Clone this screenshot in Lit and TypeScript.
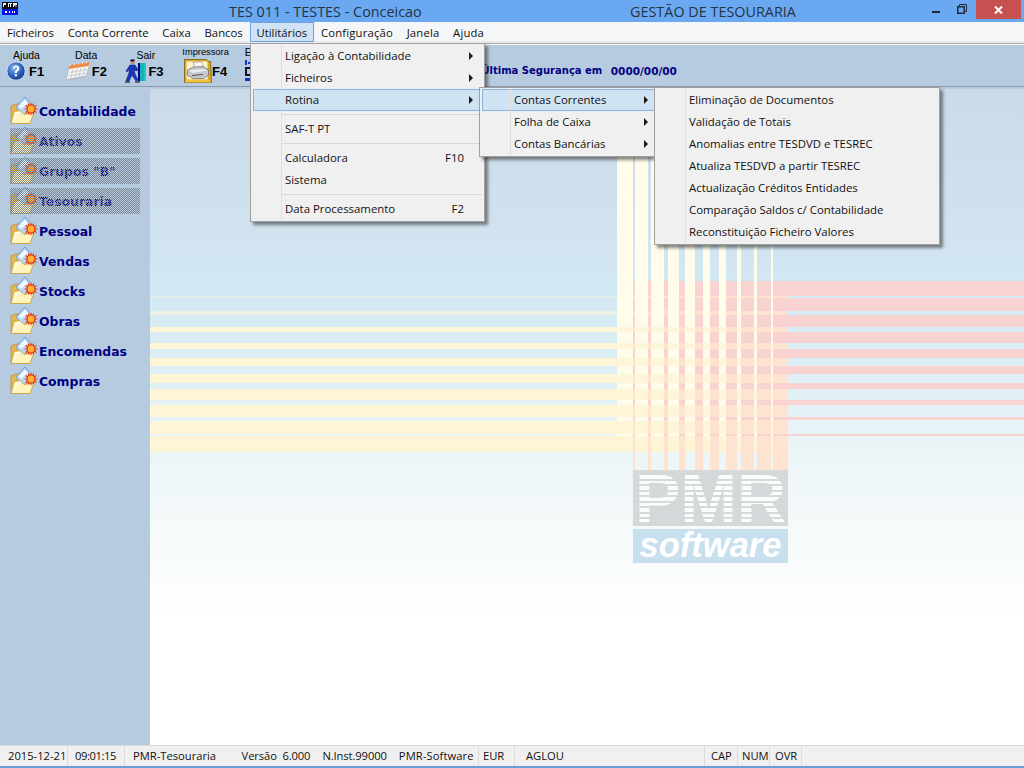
import { LitElement, html, css, svg } from "lit";
import { customElement } from "lit/decorators.js";

const yellow: [number, number, number][] = [
  [296, 298, 0.35], [311, 315, 0.55], [327, 332, 1], [343, 349, 1], [358, 366, 1],
  [374, 383, 1], [389, 400, 1], [405, 417, 1], [421, 434, 1], [436, 452, 1],
];
const pinkH: [number, number][] = [
  [281, 296], [298, 311], [315, 327], [332, 343], [349, 358],
  [366, 374], [383, 389], [400, 405], [417, 420], [434, 436],
];
const creamV: [number, number][] = [
  [617, 633], [635, 648], [651, 664], [668, 679], [685, 695],
  [703, 710], [719, 726], [737, 741], [754, 757], [771, 773],
];
const peachV: [number, number][] = [
  [633, 635], [648, 651], [664, 668], [679, 685], [695, 703],
  [710, 719], [726, 737], [741, 754], [757, 771], [773, 788],
];
const OX = 150, OY = 89;

function backdrop() {
  return html`<svg class="art" width="874" height="656" viewBox="0 0 874 656">
    <defs><linearGradient id="sky" x1="0" y1="0" x2="0" y2="1">
      <stop offset="0" stop-color="#cbdae8"/><stop offset="0.22" stop-color="#d1e3ef"/>
      <stop offset="0.31" stop-color="#d2e9f3"/><stop offset="0.58" stop-color="#eef6f7"/>
      <stop offset="0.8" stop-color="#ffffff"/><stop offset="1" stop-color="#ffffff"/>
    </linearGradient></defs>
    <rect width="874" height="656" fill="url(#sky)"/>
    ${yellow.map(([a, b, o]) => svg`<rect x="0" y=${a - OY} width=${788 - OX} height=${b - a} fill="#fef5d6" opacity=${o}/>`)}
    ${peachV.map(([a, b]) => svg`<rect x=${a - OX} y=${296 - OY} width=${b - a} height=${174} fill="#fde3d0"/>`)}
    ${pinkH.map(([a, b]) => svg`<rect x=${633 - OX} y=${a - OY} width=${1024 - 633} height=${b - a} fill="#f9d2d2"/>`)}
    ${creamV.map(([a, b]) => svg`<rect x=${a - OX} y="0" width=${b - a} height=${436 - OY} fill="#fffde9"/>`)}
    ${creamV.flatMap(([a, b]) => yellow.slice(2, 9).map(([c, d]) => svg`<rect x=${a - OX} y=${c - OY} width=${b - a} height=${d - c} fill="#fff6da"/>`))}
    ${creamV.map(([a, b]) => svg`<rect x=${a - OX} y=${436 - OY} width=${b - a} height="16" fill="#fef5d6"/>`)}
  </svg>`;
}

const folderIcon = html`<svg class="folder" width="28" height="27" viewBox="0 0 28 27">
  <path d="M1 9l5-2h4l2 3h7v16H1z" fill="#e6b850" stroke="#b98a28" stroke-width=".7"/>
  <path d="M6 10l9-10 8 10-10 9z" fill="#b9d6f6" stroke="#5f8fd0" stroke-width=".8"/>
  <path d="M8.5 9.5l6.5-7 3 3.5-7 6z" fill="#f2f9ff"/>
  <path d="M1 26.5l3-12 6-1 4 4 10-2-4 11z" fill="#fff3bd" stroke="#cc9c2c" stroke-width=".8"/>
  <path d="M4.5 24l2-8 4-.6" fill="none" stroke="#fffdf0" stroke-width="1.4"/>
  <path d="M21 5l1 3 2-2 0 3 3-1-2 3 3 1-3 1 2 3-3-1 0 3-2-2-1 3-1-3-2 2 0-3-3 1 2-3-3-1 3-1-2-3 3 1 0-3 2 2z" fill="#e83810"/>
  <circle cx="21" cy="12" r="3.4" fill="#ffb030"/>
</svg>`;

const helpIcon = html`<svg width="20" height="20" viewBox="0 0 20 20">
  <defs><radialGradient id="hb" cx=".4" cy=".35" r=".7"><stop offset="0" stop-color="#8fb8ea"/><stop offset=".6" stop-color="#2a62c0"/><stop offset="1" stop-color="#12337e"/></radialGradient></defs>
  <circle cx="10" cy="10" r="9.2" fill="url(#hb)" stroke="#e8eef8" stroke-width=".8"/>
  <path d="M6.8 7.6c.2-2 1.6-3 3.4-3s3.2 1.1 3.2 2.8c0 2.4-2.6 2.4-2.6 4.6H8.8c0-3 2.4-3.1 2.4-4.6 0-.7-.4-1.1-1.1-1.1-.8 0-1.2.5-1.3 1.3z" fill="#fff"/>
  <rect x="8.8" y="13.2" width="2.1" height="2.2" fill="#fff"/>
</svg>`;

const calIcon = html`<svg width="25" height="21" viewBox="0 0 25 21">
  <path d="M0 19.5L3 6 24 2l-4 14z" fill="#f7f5f2" stroke="#a8aeb8" stroke-width=".7"/>
  <path d="M2.6 8L3.6 4 23.6 .8 22.4 5z" fill="#ee8a44"/>
  <path d="M4 5l.6-2M8 4.4l.6-2M12 3.8l.6-2M16 3.2l.6-2M20 2.6l.6-2" stroke="#fff" stroke-width=".8"/>
  <path d="M7 8l-2.4 10M11 7.4L8.6 17.4M15 6.8l-2.4 10M19 6.2l-2.4 10M3 11.5l18-3M2.2 15l18-3" stroke="#c3cad6" stroke-width=".9"/>
  <path d="M0 19.5l20-3.500 .8-1.600L1 18z" fill="#b2bac8"/>
</svg>`;

const runIcon = html`<svg width="22" height="24" viewBox="0 0 22 24">
  <rect x="13" y="4" width="2" height="18" fill="#000080"/>
  <rect x="15" y="4" width="6" height="18" fill="#22c8c8"/>
  <path d="M16 4v18M18 4v18" stroke="#0a8a9a" stroke-width=".7"/>
  <circle cx="7.5" cy="3" r="2.2" fill="#c98a60"/><rect x="5.500" y="0.500" width="4" height="1.800" fill="#000040"/>
  <path d="M5 6h5l3 5-2 1-2-2 1 5 3 6-2 1-4-6-3 6H1l3-8 0-4-2 3-1-1z" fill="#1838c0" stroke="#000060" stroke-width=".5"/>
  <path d="M0 23h5M10 23h5" stroke="#000" stroke-width="1"/>
</svg>`;

const printIcon = html`<svg width="28" height="25" viewBox="0 0 28 25">
  <path d="M0.5 .5h22l1 2h3l1 21H.5z" fill="#d8a828" stroke="#7a5c10" stroke-width=".8"/>
  <rect x="2.5" y="2.5" width="21" height="18" fill="#fff4cc"/>
  <path d="M9 3.500l8-1 3 6-9 1z" fill="#f6f6f6" stroke="#888" stroke-width=".6"/>
  <path d="M3.500 11l6-3 10-.5 5 3.500v5l-5 3.500H9l-5.500-3z" fill="#c4c8cc" stroke="#666a70" stroke-width=".7"/>
  <path d="M5 11.500l14-1.500 4 1.500-14 2.500z" fill="#eceef0"/><path d="M8 16.500l11-1" stroke="#555" stroke-width="1"/>
  <path d="M2 21h23l2 2.500H1z" fill="#f0c440"/>
</svg>`;

const exIcon = html`<svg width="8" height="22" viewBox="0 0 8 22">
  <rect x="0" y="0" width="2" height="5" fill="#1030d0"/><rect x="3" y="2" width="5" height="2" fill="#1030d0"/>
  <rect x="0" y="7" width="8" height="9" fill="#101030"/><rect x="2" y="9" width="6" height="5" fill="#b6cbe0"/>
  <rect x="0" y="18" width="5" height="3" fill="#1030d0"/>
</svg>`;

const tools = [
  { label: "Ajuda", icon: helpIcon, key: "F1", cls: "t1" },
  { label: "Data", icon: calIcon, key: "F2", cls: "t2" },
  { label: "Sair", icon: runIcon, key: "F3", cls: "t3" },
  { label: "Impressora", icon: printIcon, key: "F4", cls: "t4" },
];

const side: [string, boolean][] = [
  ["Contabilidade", false], ["Ativos", true], ['Grupos "B"', true], ["Tesouraria", true],
  ["Pessoal", false], ["Vendas", false], ["Stocks", false], ["Obras", false],
  ["Encomendas", false], ["Compras", false],
];

const menus = ["Ficheiros", "Conta Corrente", "Caixa", "Bancos", "Utilitários", "Configuração", "Janela", "Ajuda"];

type Row = { t?: string; arrow?: boolean; key?: string; on?: boolean; sep?: boolean };
const m1: Row[] = [
  { t: "Ligação à Contabilidade", arrow: true }, { t: "Ficheiros", arrow: true }, { t: "Rotina", arrow: true, on: true },
  { sep: true }, { t: "SAF-T PT" }, { sep: true }, { t: "Calculadora", key: "F10" }, { t: "Sistema" },
  { sep: true }, { t: "Data Processamento", key: "F2" },
];
const m2: Row[] = [
  { t: "Contas Correntes", arrow: true, on: true }, { t: "Folha de Caixa", arrow: true }, { t: "Contas Bancárias", arrow: true },
];
const m3: Row[] = [
  "Eliminação de Documentos", "Validação de Totais", "Anomalias entre TESDVD e TESREC", "Atualiza TESDVD a partir TESREC",
  "Actualização Créditos Entidades", "Comparação Saldos c/ Contabilidade", "Reconstituição Ficheiro Valores",
].map((t) => ({ t }));

function menu(cls: string, rows: Row[]) {
  return html`<div class="menu ${cls}">
    ${rows.map((r) =>
      r.sep
        ? html`<div class="sep"></div>`
        : html`<div class="row ${r.on ? "on" : ""}">
            <span class="lbl">${r.t}</span>
            ${r.key ? html`<span class="key">${r.key}</span>` : ""}
            ${r.arrow ? html`<span class="arrow"></span>` : ""}
          </div>`
    )}
  </div>`;
}

@customElement("app-root")
export class AppRoot extends LitElement {
  static styles = css`
    :host { display: flex; flex-direction: column; position: relative; width: 1024px; height: 768px; overflow: hidden;
      font-family: "Open Sans", "Noto Sans", sans-serif; font-size: 11.5px; color: #111; background: #b6cbe0; }
    .title { height: 22px; flex: none; background: #6aa9f2; display: flex; align-items: center; box-sizing: border-box; padding-left: 2px; position: relative; }
    .appicon { width: 16px; height: 13px; margin-top: -5px; flex: none; }
    .ttext { font-size: 14.4px; color: #263445; white-space: nowrap; }
    .t-a { margin-left: 211px; width: 401px; }
    .winbtns { position: absolute; inset: 0 3px auto auto; display: flex; height: 19px; align-items: flex-start; }
    .min { width: 8px; height: 2px; background: #1e2a38; margin: 11px 17px 0 0; }
    .restore { width: 10px; height: 10px; margin: 4px 9px 0 0; }
    .close { width: 45px; height: 19px; background: #c75050; display: flex; align-items: center; justify-content: center; }
    .menubar { flex: none; background: #f5f6f8; border-bottom: 1px solid #a9a9a9; box-sizing: border-box; display: flex; font-size: 11.3px; box-shadow: inset 0 -2px 0 #e9eaeb; height: 22px; }
    .mi { padding: 0 6.9px; height: 20px; line-height: 19px; box-sizing: border-box; white-space: nowrap; border: 1px solid transparent; border-width: 1px 0; }
    .mi:nth-child(n+6) { letter-spacing: .16px; }
    .mi.on { background: #cfe3f5; border: 1px solid #6fa3dc; padding: 0 5.9px; }
    .toolbar { height: 43px; flex: none; background: #b6cbe0; border-top: 1px solid #f6f6f6; border-bottom: 1px solid #8d9aa8; box-sizing: border-box; display: flex; padding-left: 6px; margin-bottom: 2px; align-items: flex-start; }
    .tool { width: 59.7px; flex: none; padding-top: 5px; }
    .tlabel { width: 41px; height: 11px; display: flex; justify-content: center; font-family: "Liberation Sans", sans-serif; font-size: 10.5px; line-height: 11px; white-space: nowrap; color: #000; }
    .t4 .tlabel, .t5 .tlabel { margin-top: -3px; margin-bottom: 3px; }
    .t4 .tlabel { font-size: 9.3px; }
    .tbody { display: flex; align-items: center; height: 24px; margin-top: -2px; }
    .tkey { font-family: "Liberation Sans", sans-serif; font-weight: 700; font-size: 13px; margin-left: 1px; color: #000; }
    .t1 .tkey { margin-left: 3px; }
    .t4 .tkey { margin-left: 0; }
    .t4 svg { margin-left: -1px; }
    .t5 .tlabel { justify-content: flex-start; }
    .backup { margin-left: 177px; margin-top: 19px; font-family: "DejaVu Sans", sans-serif; font-weight: 700; font-size: 10px; color: #000080; white-space: nowrap; line-height: 14px; display: flex; }
    .bdate { margin-left: 8.5px; font-size: 10.5px; }
    .body { flex: 1; display: flex; min-height: 0; }
    .sidebar { width: 150px; flex: none; background: #b6cbe0; padding: 9px 0 0 10px; box-sizing: border-box; display: flex; flex-direction: column; gap: 4px; }
    .sitem { position: relative; width: 130px; height: 26px; display: flex; align-items: center; font-family: "DejaVu Sans", sans-serif; font-weight: 700; font-size: 12.4px; color: #000080; white-space: nowrap; }
    .sitem .folder { flex: none; margin-right: 1px; margin-top: -2px; }
    .sitem.off::after { content: ""; position: absolute; inset: 0; background: repeating-conic-gradient(#7c8794 0 25%, transparent 0 50%) 0 0 / 2px 2px; }
    .canvas { flex: 1; position: relative; overflow: hidden; background: #fff; }
    .art { position: absolute; left: 0; top: 0; display: block; }
    .logo { position: absolute; left: 483px; top: 381px; width: 155px; }
    .pmr { height: 56px; position: relative; background: repeating-linear-gradient(#d6d8da 0 3.5px, #f2f5f5 3.5px 5.5px); font-family: "Liberation Sans", sans-serif; font-weight: 700; font-size: 68px; line-height: 56px; color: #fbfcfc; text-align: center; }
    .pmr::after { content: ""; position: absolute; inset: 0; background: repeating-linear-gradient(transparent 0 3.5px, rgba(208,211,213,.85) 3.5px 5.5px); }
    .soft { margin-top: 3px; height: 34px; background: #c8e0ee; font-family: "Liberation Sans", sans-serif; font-style: italic; font-weight: 700; font-size: 34.5px; line-height: 32px; color: #fff; text-align: center; }
    .status { height: 23px; flex: none; box-sizing: border-box; background: #f0f0f0; border-top: 1px solid #dadada; border-bottom: 2px solid #6a9bd2; display: grid; grid-template-columns: 68px 57px 354px 36px 190px 33px 32px 32px 1fr; font-size: 11.2px; line-height: 20px; white-space: nowrap; }
    .sp { border-right: 1px solid #dcdcdc; box-sizing: border-box; padding-left: 8px; display: flex; overflow: hidden; }
    .sp:last-child { border-right: 0; }
    .sp.p2 { padding-left: 7px; letter-spacing: -.4px; }
    .sp.p3 { padding-left: 8px; }
    .sp.p4 { padding-left: 4px; }
    .sp.p5 { padding-left: 11px; }
    .s2 { margin-left: 25.5px; white-space: pre; letter-spacing: -.1px; } .s3 { margin-left: 12px; letter-spacing: -.1px; }
    .s4 { margin-left: 12px; letter-spacing: .1px; }
    .sp.p6 { padding-left: 6px; } .sp.p7 { padding-left: 4px; } .sp.p8 { padding-left: 5px; }
    .menu { position: absolute; box-sizing: border-box; background: #f0f0f0; border: 1px solid #a0a0a0; padding: 1px 0; box-shadow: 3px 3px 3px rgba(40,40,40,.55); font-size: 11.4px; }
    .menu::before { content: ""; position: absolute; left: 30px; top: 1px; bottom: 1px; width: 1px; background: #dedede; z-index: 1; }
    .m1 { left: 250px; top: 43px; width: 235px; z-index: 2; }
    .m2 { left: 479px; top: 87px; width: 181px; z-index: 3; }
    .m3 { left: 654px; top: 87px; width: 286px; z-index: 4; }
    .row { height: 22px; box-sizing: border-box; margin: 0 2px; padding: 0 8px 0 31px; border: 1px solid transparent; display: flex; align-items: center; white-space: nowrap; }
    .lbl, .key { padding-bottom: 2px; }
    .row.on { background: #d0e3f3; border-color: #84b3e6; }
    .lbl { flex: 1; }
    .key { margin-right: 9px; }
    .arrow { width: 0; height: 0; border-left: 4px solid #1a1a1a; border-top: 4px solid transparent; border-bottom: 4px solid transparent; margin-top: -1px; }
    .sep { height: 7px; position: relative; }
    .sep::after { content: ""; position: absolute; left: 30px; right: 2px; top: 3px; height: 1px; background: #d8d8d8; }
  `;

  render() {
    return html`
      <div class="title">
        <svg class="appicon" viewBox="0 0 16 13" width="16" height="13">
          <rect width="16" height="7" fill="#101010"/>
          <path d="M1 1h3v2H2v2H1zM6 1h4v1H9v3H8V2H7v3H6zM11 1h4v2h-2l2 2h-1l-2-2v2h-1z" fill="#f2f2f2"/>
          <rect y="7" width="16" height="6" fill="#0a14e8"/>
          <path d="M3 9h2v2H3zM7 9h1v2H7zM10 9h1v2h-1zM12 9h1v2h-1z" fill="#fff"/>
        </svg>
        <span class="ttext t-a">TES 011 - TESTES - Conceicao</span>
        <span class="ttext">GESTÃO DE TESOURARIA</span>
        <div class="winbtns">
          <div class="min"></div>
          <svg class="restore" viewBox="0 0 10 10"><path d="M2.5 2.5V.5h7v7h-2" fill="none" stroke="#1e2a38"/><rect x=".75" y="2.75" width="6.5" height="6.5" fill="none" stroke="#1e2a38" stroke-width="1.5"/></svg>
          <div class="close"><svg width="9" height="8" viewBox="0 0 9 8"><path d="M1 .5l7 7M8 .5l-7 7" stroke="#fff" stroke-width="2"/></svg></div>
        </div>
      </div>
      <div class="menubar">${menus.map((m) => html`<div class="mi ${m === "Utilitários" ? "on" : ""}">${m}</div>`)}</div>
      <div class="toolbar">
        ${tools.map((t) => html`<div class="tool ${t.cls}">
          <div class="tlabel">${t.label}</div>
          <div class="tbody">${t.icon}<span class="tkey">${t.key}</span></div>
        </div>`)}
        <div class="tool t5"><div class="tlabel">E</div><div class="tbody">${exIcon}</div></div>
        <div class="backup"><span>Última Segurança em</span><span class="bdate">0000/00/00</span></div>
      </div>
      <div class="body">
        <nav class="sidebar">
          ${side.map(([t, off]) => html`<div class="sitem ${off ? "off" : ""}">${folderIcon}<span>${t}</span></div>`)}
        </nav>
        <main class="canvas">
          ${backdrop()}
          <div class="logo"><div class="pmr">PMR</div><div class="soft">software</div></div>
        </main>
      </div>
      <footer class="status">
        <div class="sp">2015-12-21</div>
        <div class="sp p2">09:01:15</div>
        <div class="sp p3"><span>PMR-Tesouraria</span><span class="s2">Versão  6.000</span><span class="s3">N.Inst.99000</span><span class="s4">PMR-Software</span></div>
        <div class="sp p4">EUR</div>
        <div class="sp p5">AGLOU</div>
        <div class="sp p6">CAP</div>
        <div class="sp p7">NUM</div>
        <div class="sp p8">OVR</div>
        <div class="sp"></div>
      </footer>
      ${menu("m1", m1)}${menu("m2", m2)}${menu("m3", m3)}
    `;
  }
}
